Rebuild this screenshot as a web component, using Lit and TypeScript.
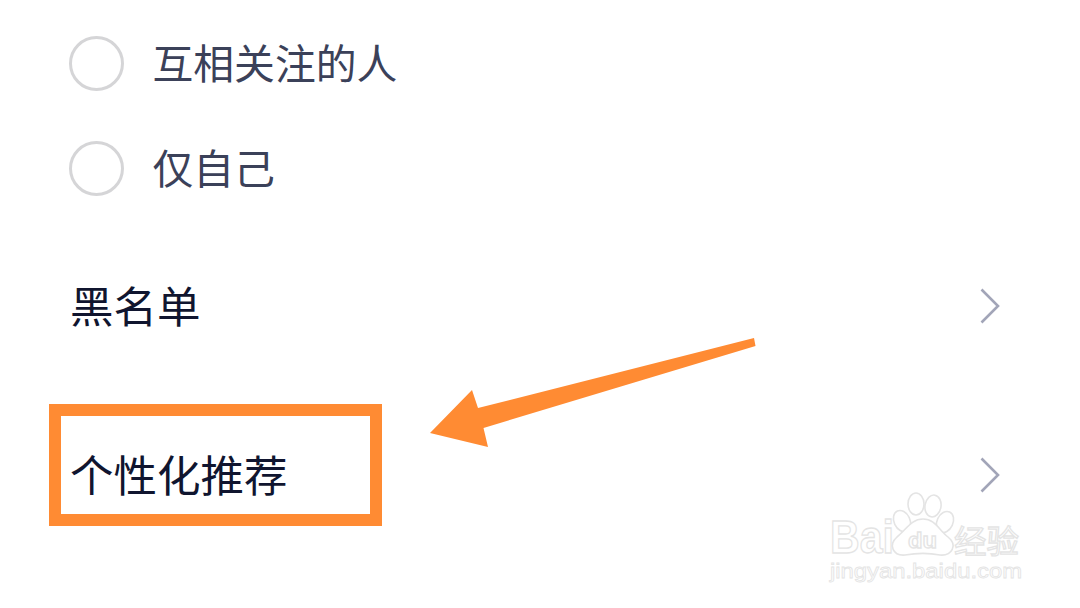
import { LitElement, html, css, svg } from "lit";
import { customElement } from "lit/decorators.js";

const chevron = html`<svg class="chev" viewBox="0 0 20 36" width="20" height="36">
  <path d="M1.5 1.5 L18 18 L1.5 34.5" fill="none" stroke="#a2a5b8" stroke-width="2.6"/>
</svg>`;

@customElement("app-root")
export class AppRoot extends LitElement {
  static styles = css`
    :host {
      display: block;
      position: relative;
      width: 1080px;
      height: 608px;
      overflow: hidden;
      background: #fff;
      font-family: "Noto Sans CJK SC", "Noto Sans", sans-serif;
    }
    .list { display: flex; flex-direction: column; padding: 11px 80px 0 69px; }
    .radio-row { display: flex; align-items: center; gap: 28.5px; height: 105px; }
    .radio {
      width: 55px; height: 55px; box-sizing: border-box; border-radius: 50%;
      border: 3px solid #d5d5d7;
    }
    .radio-label { font-size: 40.8px; line-height: 55px; padding-bottom: 4px; color: #3b4159; }
    .groups { display: flex; flex-direction: column; }
    .nav-row {
      display: flex; align-items: center; justify-content: space-between;
      height: 169px; padding-left: 1px;
    }
    .nav-label { font-size: 43.5px; line-height: 60px; padding-bottom: 1px; color: #10152f; }
    .chev { display: block; }
    .highlight {
      position: absolute; left: 49px; top: 404px; width: 333px; height: 122px;
      box-sizing: border-box; border: 12px solid #ff8b33;
    }
    .arrow { position: absolute; left: 0; top: 0; }
    .wm { position: absolute; left: 0; top: 0; }
    .wm text { fill: #fff; stroke: #e4e4e4; stroke-width: 1.3; }
    .wm .paw { fill: #fff; stroke: #e4e4e4; stroke-width: 1.6; }
    .wm .latin { font-family: "Liberation Sans", Arial, sans-serif; }
    .wm .cjk { font-family: "Noto Sans CJK SC", sans-serif; }
  `;

  render() {
    return html`
      <div class="list">
        <div class="radio-row"><span class="radio"></span><span class="radio-label">互相关注的人</span></div>
        <div class="radio-row"><span class="radio"></span><span class="radio-label">仅自己</span></div>
        <div class="groups">
          <div class="nav-row"><span class="nav-label">黑名单</span>${chevron}</div>
          <div class="nav-row"><span class="nav-label">个性化推荐</span>${chevron}</div>
        </div>
      </div>
      <div class="highlight"></div>
      <svg class="arrow" width="1080" height="608" viewBox="0 0 1080 608">
        <polygon fill="#ff8b33" points="754,338 755.5,346 483.5,428 488,447 430,433 472,390 478,408"/>
      </svg>
      <svg class="wm" width="1080" height="608" viewBox="0 0 1080 608">
        ${svg`
          <text class="latin" x="830" y="553" font-size="47" font-weight="700" textLength="64" lengthAdjust="spacingAndGlyphs">Bai</text>
          <ellipse class="paw" cx="902" cy="521" rx="8" ry="11" transform="rotate(-25 902 521)"/>
          <ellipse class="paw" cx="916" cy="504" rx="8" ry="11"/>
          <ellipse class="paw" cx="933" cy="506" rx="8" ry="11" transform="rotate(10 933 506)"/>
          <ellipse class="paw" cx="945" cy="522" rx="8" ry="11" transform="rotate(25 945 522)"/>
          <path class="paw" d="M923 519 C911 519 906 530 897 537 C888 545 893 556 905 555 C916 553 930 553 940 555 C952 556 958 545 948 537 C939 530 935 519 923 519 Z"/>
          <text class="latin" x="908" y="548" font-size="22" font-weight="700" textLength="29" lengthAdjust="spacingAndGlyphs">du</text>
          <text class="cjk" x="954" y="553" font-size="32" textLength="65" lengthAdjust="spacingAndGlyphs">经验</text>
          <text class="latin" x="830" y="578" font-size="20.5" textLength="192" lengthAdjust="spacingAndGlyphs" style="stroke-width:.8">jingyan.baidu.com</text>
        `}
      </svg>
    `;
  }
}
